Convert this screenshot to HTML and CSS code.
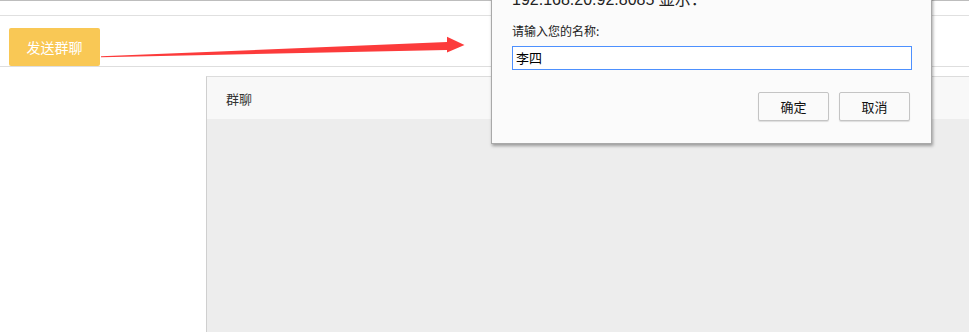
FILE: index.html
```html
<!DOCTYPE html>
<html lang="zh-CN">
<head>
<meta charset="utf-8">
<title>群聊</title>
<link rel="stylesheet" href="styles.css">
</head>
<body>
<div class="topbar"></div>
<div class="toolbar">
  <button class="send-btn">发送群聊</button>
</div>
<div class="panel">
  <div class="panel-head">群聊</div>
  <div class="panel-body"></div>
</div>

<svg class="arrow" width="969" height="80" viewBox="0 0 969 80">
  <polygon points="101,56.3 447,42 447,36.8 464.5,45 447,52.5 447,50 101,57.2" fill="#fc3b3b"/>
</svg>

<div class="dialog">
  <div class="dialog-title">192.168.20.92:8085 显示：</div>
  <div class="dialog-label">请输入您的名称:</div>
  <div class="dialog-input">李四</div>
  <div class="dialog-actions">
    <button class="dlg-btn">确定</button>
    <button class="dlg-btn">取消</button>
  </div>
</div>
</body>
</html>
```

FILE: styles.css
```css
html, body {
  margin: 0;
  padding: 0;
  background: #fff;
  overflow: hidden;
  height: 332px;
  font-family: "Noto Sans CJK SC", "Noto Sans", sans-serif;
}

.topbar {
  height: 14px;
  border-top: 1px solid #bdbdbd;
  border-bottom: 1px solid #e0e0e0;
}

.toolbar {
  padding: 12px 0 0 9px;
  box-sizing: border-box;
  height: 51px;
  border-bottom: 1px solid #dedede;
}

.send-btn {
  display: flex;
  align-items: center;
  justify-content: center;
  width: 91px;
  height: 38px;
  border: 0;
  border-radius: 2px;
  background: #f9c855;
  color: #fff;
  font-family: "Noto Sans CJK SC", sans-serif;
  font-size: 14px;
  padding: 0;
}

.panel {
  margin: 9px 0 0 206px;
  width: 763px;
  border-left: 1px solid #cfcfcf;
  border-top: 1px solid #dcdcdc;
  height: 255px;
  display: flex;
  flex-direction: column;
}

.panel-head {
  height: 42px;
  background: #f8f8f8;
  padding-left: 19px;
  display: flex;
  align-items: center;
  font-size: 13px;
  color: #333;
}

.panel-body {
  flex: 1;
  background: #ededed;
}

.arrow {
  position: absolute;
  left: 0;
  top: 0;
}

.dialog {
  position: absolute;
  left: 491px;
  top: -12px;
  width: 419px;
  height: 154px;
  background: #fbfbfb;
  border: 1px solid #a9a9a9;
  box-shadow: 1px 2px 3px rgba(0, 0, 0, 0.35);
  padding: 0 0 0 20px;
  font-family: "Noto Sans CJK SC", sans-serif;
  color: #222;
}

.dialog-title {
  height: 22px;
  line-height: 22px;
  font-size: 16px;
  color: #222;
  font-family: "Liberation Sans", "Noto Sans CJK SC", sans-serif;
  white-space: nowrap;
}

.dialog-label {
  margin-top: 12px;
  height: 16px;
  line-height: 16px;
  font-size: 12px;
  color: #222;
}

.dialog-input {
  margin-top: 7px;
  width: 395px;
  height: 22px;
  border: 1px solid #4d90fe;
  background: #fff;
  font-size: 13px;
  line-height: 22px;
  padding-left: 3px;
  color: #000;
}

.dialog-actions {
  margin-top: 22px;
  display: flex;
  justify-content: flex-end;
  gap: 10px;
  padding-right: 21px;
}

.dlg-btn {
  width: 71px;
  height: 29px;
  border: 1px solid #c4c4c4;
  border-radius: 2px;
  background: #fafafa;
  box-shadow: 0 1px 1px rgba(0, 0, 0, 0.12);
  font-family: "Noto Sans CJK SC", sans-serif;
  font-size: 13px;
  color: #111;
  padding: 0;
}
```
